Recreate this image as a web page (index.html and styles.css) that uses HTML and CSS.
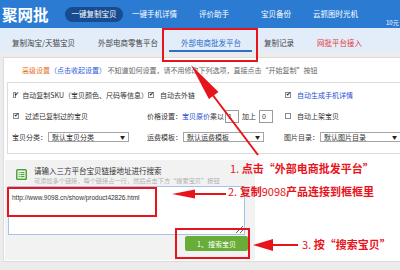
FILE: index.html
```html
<!DOCTYPE html>
<html lang="zh-CN">
<head>
    <meta charset="UTF-8">
    <meta name="viewport" content="width=device-width, initial-scale=1.0">
    <title>聚网批 - 外部电商批发平台</title>
    <link rel="stylesheet" href="styles.css">
</head>
<body>

<div class="topbar">
    <div class="logo">聚网批</div>
    <a class="nav-item current">一键复制宝贝</a>
    <a class="nav-item first">一键手机详情</a>
    <a class="nav-item">评价助手</a>
    <a class="nav-item wide">宝贝备份</a>
    <a class="nav-item">云抓图时光机</a>
    <span class="price">10元</span>
</div>

<div class="tabs">
    <a class="tab">复制淘宝/天猫宝贝</a>
    <a class="tab">外部电商零售平台</a>
    <a class="tab active">外部电商批发平台</a>
    <a class="tab">复制记录</a>
    <a class="tab hot">网批平台接入</a>
</div>

<div class="panel">
    <p class="tip">
        <span class="tip-title">高级设置</span><span class="tip-link">（点击收起设置）</span>
        不知道如何设置，请不用修改下列选项，直接点击“开始复制”按钮
    </p>

    <div class="options">
        <div class="row">
            <label class="check"><span class="box on"></span>自动复制SKU（宝贝颜色、尺码等信息）</label>
            <label class="check"><span class="box on"></span>自动去外链</label>
            <label class="check"><span class="box on"></span><span class="link">自动生成手机详情</span></label>
        </div>
        <div class="row">
            <label class="check"><span class="box on"></span>过滤已复制过的宝贝</label>
            <div class="field">
                价格设置：<span class="link">宝贝原价</span>乘以
                <input class="num" type="text" value="1">
                <span class="plus">加上</span>
                <input class="num" type="text" value="0">
            </div>
            <label class="check"><span class="box"></span>自动上架宝贝</label>
        </div>
        <div class="row">
            <div class="field">
                <span class="field-label">宝贝分类：</span>
                <div class="select"><span>默认宝贝分类</span><span class="arrow">▼</span></div>
            </div>
            <div class="field">
                <span class="field-label">运费模板：</span>
                <div class="select"><span>默认运费模板</span><span class="arrow">▼</span></div>
            </div>
            <div class="field">
                <span class="field-label">图片目录：</span>
                <div class="select"><span>默认图片目录</span><span class="arrow">▼</span></div>
            </div>
        </div>
    </div>

    <div class="search">
        <div class="search-head">
            <svg class="search-icon" width="11" height="11" viewBox="0 0 11 11">
                <rect x="0" y="0" width="11" height="11" rx="1.5" fill="#4da534"/>
                <rect x="1.5" y="1.5" width="8" height="8" fill="#fff"/>
                <rect x="2.5" y="3" width="1.2" height="1.2" fill="#4da534"/>
                <rect x="4.5" y="3" width="4" height="1.2" fill="#4da534"/>
                <rect x="2.5" y="5" width="1.2" height="1.2" fill="#4da534"/>
                <rect x="4.5" y="5" width="4" height="1.2" fill="#4da534"/>
                <rect x="2.5" y="7" width="1.2" height="1.2" fill="#4da534"/>
                <rect x="4.5" y="7" width="4" height="1.2" fill="#4da534"/>
            </svg>
            <div>
                <div class="search-title">请输入三方平台宝贝链接地址进行搜索</div>
                <div class="search-hint">可添加多个链接，每个链接占一行，然后点击下方“搜索宝贝”按钮</div>
            </div>
        </div>
        <textarea class="links">http://www.9098.cn/show/product42826.html</textarea>
        <div class="actions">
            <button class="search-button">1、搜索宝贝</button>
        </div>
    </div>
</div>

<svg class="marks" width="400" height="270" viewBox="0 0 400 270">
    <g fill="none" stroke="#e8141b" stroke-width="2">
        <rect x="163" y="29" width="94" height="32"/>
        <rect x="8" y="188" width="148" height="28"/>
        <rect x="176" y="229" width="73" height="29"/>
        <line x1="258" y1="155" x2="212" y2="94"/>
        <line x1="226" y1="194" x2="192" y2="194"/>
        <line x1="298" y1="245" x2="270" y2="245"/>
    </g>
    <g fill="#e8141b">
        <polygon points="191,65 218.5,91.9 208.9,99.1"/>
        <polygon points="172,194 195,189.5 195,198.5"/>
        <polygon points="253,245 273,239 273,251"/>
    </g>
</svg>

<div class="note note-1"><span class="step">1.</span> 点击“外部电商批发平台”</div>
<div class="note note-2"><span class="step">2.</span> 复制<span class="step">9098</span>产品连接到框框里</div>
<div class="note note-3"><span class="step">3.</span> 按“搜索宝贝”</div>

</body>
</html>
```

FILE: styles.css
```css
* {
    box-sizing: border-box;
}
body {
    margin: 0;
    width: 400px;
    height: 270px;
    overflow: hidden;
    position: relative;
    background: #ececec;
    font-family: "Noto Sans CJK SC", "Liberation Sans", sans-serif;
    font-size: 7px;
    color: #333;
}
a {
    text-decoration: none;
    white-space: nowrap;
}

/* top bar */
.topbar {
    display: flex;
    align-items: center;
    height: 28px;
    padding-left: 2px;
    background: #2b7bd3;
    color: #fff;
}
.logo {
    width: 48px;
    margin-right: 15px;
    font-size: 15.5px;
    font-weight: bold;
    line-height: 16px;
    white-space: nowrap;
}
.nav-item {
    margin-left: 22px;
    font-size: 7.5px;
    line-height: 10px;
    color: #fff;
}
.nav-item.current {
    margin-left: 0;
    padding: 2.5px 6.5px;
    border-radius: 8px;
    background: #184b90;
}
.nav-item.first {
    margin-left: 9px;
}
.nav-item.wide {
    margin-left: 32px;
}
.price {
    align-self: flex-end;
    margin-left: 28px;
    padding-bottom: 1px;
    font-size: 6px;
    line-height: 8px;
    white-space: nowrap;
}

/* tabs */
.tabs {
    display: flex;
    height: 24px;
    padding-left: 0.5px;
    background: #e2edf9;
}
.tab {
    padding: 10px 11.5px 2px;
    border-bottom: 2px solid transparent;
    font-size: 7.5px;
    line-height: 10px;
    color: #444;
}
.tab.active {
    color: #1f6bc9;
    border-bottom-color: #2a70cf;
}
.tab.hot {
    color: #e4393c;
}

/* main panel */
.panel {
    width: 420px;
    height: 205px;
    margin: 5px 0 0 3px;
    background: #fff;
    border: 1px solid #dcdcdc;
}
.tip {
    margin: 7px 0 0;
    padding-left: 18px;
    line-height: 10px;
    color: #666;
    white-space: nowrap;
}
.tip-title {
    color: #e6731f;
}
.tip-link {
    color: #2a5bd7;
}

.options {
    margin: 7px 0 0 3px;
    padding: 5.5px 0 9.5px 5px;
    border: 1px solid #ddd;
    display: flex;
    flex-direction: column;
    gap: 8px;
}
.row {
    display: grid;
    grid-template-columns: 135px 137px 1fr;
    height: 13px;
    align-items: center;
    white-space: nowrap;
}
.check {
    display: flex;
    align-items: center;
    line-height: 10px;
}
.box {
    position: relative;
    width: 6px;
    height: 6px;
    margin-right: 6px;
    border: 1px solid #8a8a8a;
    background: #fff;
}
.box.on::after {
    content: "✔";
    position: absolute;
    left: -0.5px;
    top: -3px;
    font-size: 6px;
    line-height: 8px;
    color: #222;
}
.link {
    color: #1f4fd6;
}
.field {
    display: flex;
    align-items: center;
    line-height: 10px;
    margin-left: -1px;
}
.num {
    width: 14px;
    height: 13px;
    margin-left: 1px;
    padding: 0 2px;
    border: 1px solid #9a9a9a;
    font-family: "Liberation Sans", sans-serif;
    font-size: 7px;
    color: #333;
}
.plus {
    margin: 0 2px 0 3px;
}
.field-label {
    width: 36px;
}
.select {
    display: flex;
    justify-content: space-between;
    align-items: center;
    width: 81px;
    height: 10px;
    padding: 0 3px;
    border: 1px solid #a5a5a5;
    line-height: 8px;
}
.arrow {
    font-size: 5px;
    color: #222;
}

/* link search */
.search {
    width: 250px;
    height: 100px;
    margin: 6px 0 0 1px;
    background: #f2f2f2;
}
.search-head {
    display: flex;
    padding: 6px 0 0 11px;
}
.search-icon {
    flex: none;
    margin: 3px 7px 0 0;
}
.search-title {
    font-size: 7.5px;
    line-height: 10px;
    color: #333;
}
.search-hint {
    font-size: 6.2px;
    line-height: 10px;
    color: #b0b0b0;
    white-space: nowrap;
}
.links {
    display: block;
    width: 237px;
    height: 49px;
    margin-left: 3px;
    padding: 7px 3px;
    border: 1px solid #a7c2ea;
    background: #fff;
    font-family: "Liberation Sans", sans-serif;
    font-size: 6.5px;
    line-height: 8px;
    color: #333;
    resize: both;
}
.actions {
    display: flex;
    justify-content: flex-end;
    width: 243px;
    margin-top: 1px;
}
.search-button {
    width: 63px;
    height: 15px;
    padding: 0;
    border: none;
    border-radius: 2px;
    background: #68ad37;
    color: #fff;
    font-family: inherit;
    font-size: 7px;
}

/* red tutorial marks */
.marks {
    position: absolute;
    left: 0;
    top: 0;
    pointer-events: none;
}
.note {
    position: absolute;
    font-size: 11px;
    font-weight: bold;
    line-height: 14px;
    color: #e8141b;
    white-space: nowrap;
}
.step {
    font-weight: normal;
}
.note-1 {
    left: 230px;
    top: 161px;
}
.note-2 {
    left: 228px;
    top: 184px;
}
.note-3 {
    left: 302px;
    top: 237px;
}
```
